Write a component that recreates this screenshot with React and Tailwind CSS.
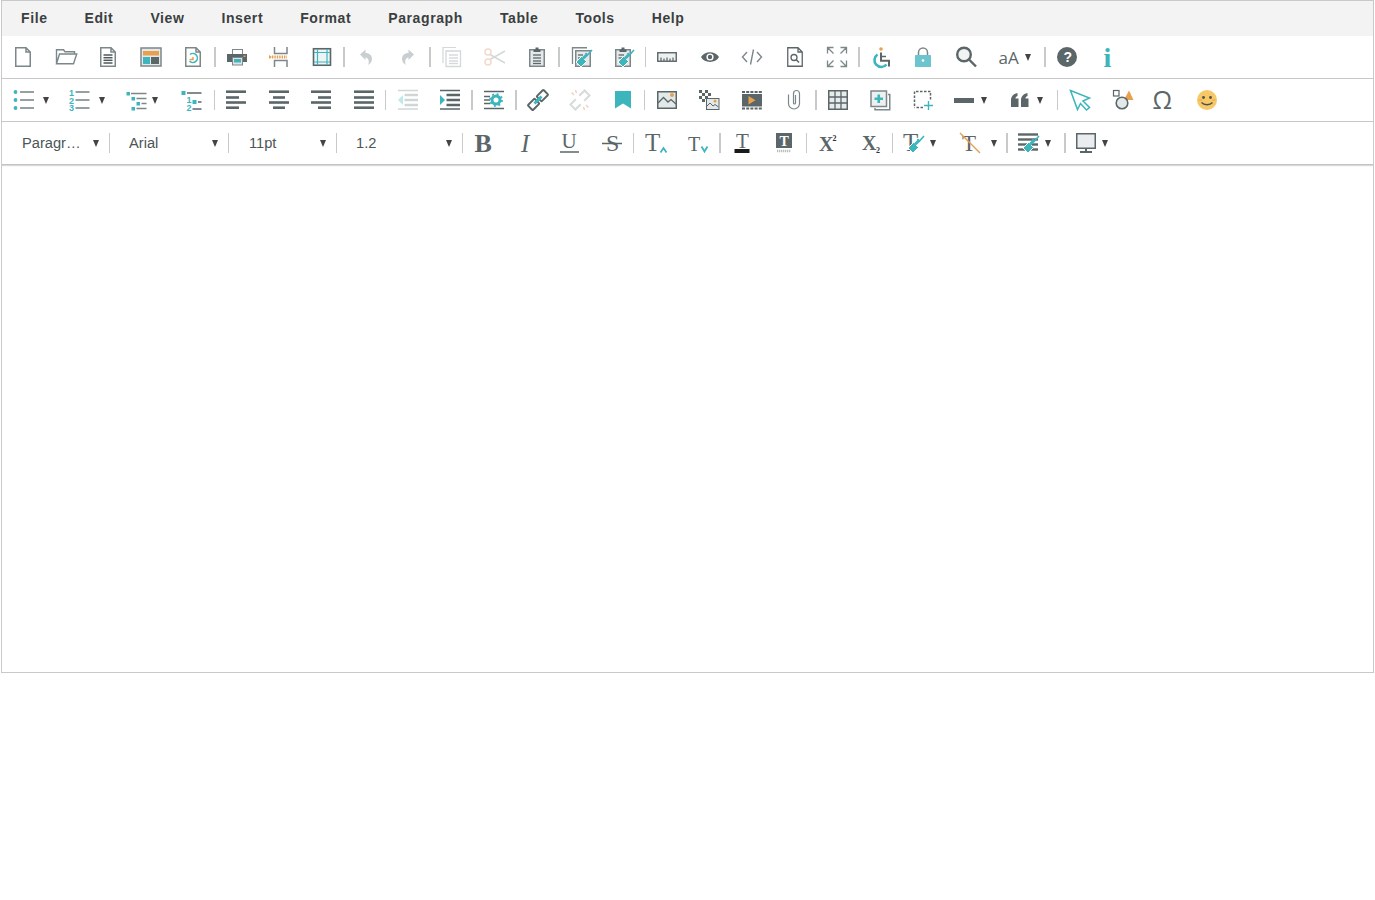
const DK = '#5b6669';
const MD = '#7c878a';
const LT = '#d3d8d9';
const TL = '#3db5bd';
const OR = '#e6a04e';
const SERIF = '"Liberation Serif", serif';

function Ic({ children }) {
  return (
    <svg width="24" height="24" viewBox="0 0 24 24" fill="none" className="block shrink-0 overflow-visible">
      {children}
    </svg>
  );
}

function Brush({ dx = 0, dy = 0 }) {
  return (
    <g transform={`translate(${dx} ${dy})`}>
      <path d="M7 17L12.5 11.5L17.5 16.5L12 22Z" fill={TL} stroke="#fff" strokeWidth="1" />
      <path d="M14 13.5L18 9.5" stroke={TL} strokeWidth="3" />
      <path d="M16.5 8L18.5 10L23 5" stroke={TL} strokeWidth="1.6" />
    </g>
  );
}

function Doc({ c = MD, w = 1.5 }) {
  return <path d="M4.75 2.75H15L19.25 7V21.25H4.75ZM15 2.75V7H19.25" stroke={c} strokeWidth={w} fill="#fff" />;
}

function Lines({ ys, x1 = 2, x2 = 22, c = DK, w = 2.2 }) {
  return ys.map((y, i) => <path key={i} d={`M${x1} ${y}H${x2}`} stroke={c} strokeWidth={w} />);
}

function Txt({ x, y, s, c = DK, b, i, f = SERIF, children }) {
  return (
    <text x={x} y={y} fontSize={s} fill={c} fontFamily={f} fontWeight={b ? 700 : 400} fontStyle={i ? 'italic' : 'normal'}>
      {children}
    </text>
  );
}

const alignL = [[2, 22], [2, 15], [2, 22], [2, 15]];
const alignC = [[2, 22], [6, 18], [2, 22], [6, 18]];
const alignR = [[2, 22], [9, 22], [2, 22], [9, 22]];
const alignJ = [[2, 22], [2, 22], [2, 22], [2, 22]];
const alignY = [3.7, 9.5, 14.5, 19.7];

function Align({ rows }) {
  return <Ic>{rows.map((r, i) => <path key={i} d={`M${r[0]} ${alignY[i]}H${r[1]}`} stroke={DK} strokeWidth="2.6" />)}</Ic>;
}

function Indent({ light }) {
  const c = light ? '#d0d6d6' : DK;
  const t = light ? '#bfe8ea' : TL;
  return (
    <Ic>
      <path d="M2 2.5H22M2 21H22" stroke={c} strokeWidth="1.4" />
      <Lines ys={[7, 12, 17]} x1={8.5} c={c} w={2.5} />
      <path d={light ? 'M2 12L7 7V17Z' : 'M7 12L2 7V17Z'} fill={t} />
    </Ic>
  );
}

function Chain({ light }) {
  const c = light ? '#d6dadb' : DK;
  return (
    <Ic>
      <g transform="rotate(-45 12 12)" stroke={c} strokeWidth="2">
        {light ? (
          <>
            <path d="M9.5 8.5H2V15.5H9.5" />
            <path d="M14.5 8.5H22V15.5H14.5" />
          </>
        ) : (
          <>
            <rect x="1" y="8.5" width="9.5" height="7" rx="0.8" />
            <rect x="13.5" y="8.5" width="9.5" height="7" rx="0.8" />
            <path d="M7 12H17" stroke={TL} strokeWidth="2.8" />
          </>
        )}
      </g>
      {light && <path d="M6 7L3.5 4.5M8.5 5L7.5 2M18 17L20.5 19.5M15.5 19L16.5 22" stroke="#f2cdbd" strokeWidth="1.3" />}
    </Ic>
  );
}

const icons1 = {
  file: <Ic><Doc /></Ic>,
  open: <Ic><path d="M2.5 18.75V4.75H9.5L11 6.75H20.5V9M2.5 18.75L5.5 9H22.75L19.5 18.75Z" stroke={MD} strokeWidth="1.4" /></Ic>,
  doc: <Ic><Doc /><Lines ys={[10, 12.7, 15.3, 18]} x1={7.5} x2={16.5} w={1.5} c="#4d5759" /></Ic>,
  tpl: (
    <Ic>
      <rect x="2" y="3" width="20" height="18" fill="#e4e8e8" stroke={MD} strokeWidth="1.5" />
      <rect x="4" y="6" width="16" height="4.5" fill={OR} />
      <rect x="4" y="12" width="7" height="7" fill={TL} />
      <rect x="12" y="12" width="8" height="7" fill={DK} />
    </Ic>
  ),
  restore: (
    <Ic>
      <Doc />
      <path d="M9 9.5A4.5 4.5 0 1 1 8.5 16" stroke={TL} strokeWidth="1.5" />
      <path d="M12 12V14.5H8.5" stroke={OR} strokeWidth="1.5" />
    </Ic>
  ),
  print: (
    <Ic>
      <rect x="7.5" y="4.5" width="10" height="5" fill="#fff" stroke={MD} />
      <path d="M2 9H22V17H18V13H7V17H2Z" fill={DK} />
      <rect x="7.5" y="12.5" width="10" height="7.5" fill="#dfe3e3" stroke={MD} />
      <rect x="9" y="14" width="7" height="3.5" fill={TL} />
      <rect x="18.5" y="10.5" width="2" height="1.5" fill={OR} />
    </Ic>
  ),
  pbreak: (
    <Ic>
      <path d="M7.5 2V8.5H20V2M7.5 22V15.5H20V22" stroke={MD} strokeWidth="1.5" />
      <path d="M5 12H20" stroke={OR} strokeWidth="3" strokeDasharray="1.4 1" />
      <path d="M2 10V14L5 12Z" fill={OR} />
    </Ic>
  ),
  tblb: (
    <Ic>
      <rect x="3.5" y="3.75" width="17" height="16.5" fill="#eef4f4" stroke={DK} strokeWidth="1.6" />
      <path d="M7.5 4V20M17 4V20M4 7.5H20M4 17H20" stroke={TL} strokeWidth="1.2" />
    </Ic>
  ),
  undo: <Ic><path d="M6 9.5L11.5 4.5V8C15.5 8 18 10.5 18 14C18 16.5 16.5 18.5 14 20C15.5 17.5 15 13 11.5 12.5V15Z" fill="#c9cfd0" /></Ic>,
  redo: <Ic><g transform="matrix(-1 0 0 1 24 0)"><path d="M6 9.5L11.5 4.5V8C15.5 8 18 10.5 18 14C18 16.5 16.5 18.5 14 20C15.5 17.5 15 13 11.5 12.5V15Z" fill="#c9cfd0" /></g></Ic>,
  copy: (
    <Ic>
      <path d="M3 18V2.5H16" stroke={LT} strokeWidth="1.2" />
      <path d="M6 6H20.5V21.5H6Z" fill="#fff" stroke={LT} strokeWidth="1.3" />
      <Lines ys={[10, 13, 16, 18.5]} x1={9} x2={18} c={LT} w={1.4} />
    </Ic>
  ),
  cut: (
    <Ic>
      <path d="M7 9.5L22 18M7 14.5L22 6" stroke={LT} strokeWidth="1.5" />
      <circle cx="5" cy="7" r="3" stroke="#f4d8ca" strokeWidth="1.5" />
      <circle cx="5" cy="17" r="3" stroke="#f4d8ca" strokeWidth="1.5" />
    </Ic>
  ),
  paste: (
    <Ic>
      <rect x="4.75" y="4.75" width="14.5" height="16.5" fill="#e6e9e9" stroke={MD} strokeWidth="1.5" />
      <path d="M8.5 7V4.5H10.5V2.5H13.5V4.5H15.5V7Z" fill={DK} />
      <Lines ys={[10, 13, 16, 18.5]} x1={8} x2={16} c={DK} w={1.3} />
    </Ic>
  ),
  cfmt: (
    <Ic>
      <path d="M3.5 19V2.75H18" stroke={MD} strokeWidth="1.3" />
      <rect x="6.75" y="5.75" width="14.5" height="15.5" fill="#e6e9e9" stroke={MD} strokeWidth="1.5" />
      <Lines ys={[10, 13]} x1={9} x2={14} c={DK} w={1.3} />
      <Brush />
    </Ic>
  ),
  pfmt: (
    <Ic>
      <rect x="4.75" y="4.75" width="14.5" height="16.5" fill="#e6e9e9" stroke={MD} strokeWidth="1.5" />
      <path d="M8.5 7V4.5H10.5V2.5H13.5V4.5H15.5V7Z" fill={DK} />
      <Lines ys={[10, 13]} x1={7.5} x2={13} c={DK} w={1.3} />
      <Brush />
    </Ic>
  ),
  ruler: (
    <Ic>
      <rect x="2.75" y="7.75" width="18.5" height="8.5" fill="#eef0f0" stroke={DK} strokeWidth="1.4" />
      <path d="M6 16V12.5M9 16V13.5M12 16V12.5M15 16V13.5M18 16V12.5" stroke={DK} strokeWidth="1.2" />
    </Ic>
  ),
  eye: (
    <Ic>
      <path d="M3 12C6.5 5.5 17.5 5.5 21 12C17.5 18.5 6.5 18.5 3 12Z" fill={DK} />
      <circle cx="12" cy="12" r="3.6" fill="#fff" />
      <circle cx="12" cy="12" r="2.2" fill={DK} />
    </Ic>
  ),
  code: <Ic><path d="M7 7L2.5 12L7 17M17 7L21.5 12L17 17M13.5 4.5L10.5 19.5" stroke={MD} strokeWidth="1.4" /></Ic>,
  dsearch: (
    <Ic>
      <Doc c={DK} w={1.3} />
      <circle cx="11" cy="12.5" r="3" stroke={DK} strokeWidth="1.3" />
      <path d="M13.3 14.8L16 17.5" stroke={DK} strokeWidth="1.6" />
    </Ic>
  ),
  full: (
    <Ic>
      <path d="M2.5 8.5V2.5H8.5M3 3L8.5 8.5M15.5 2.5H21.5V8.5M21 3L15.5 8.5M2.5 15.5V21.5H8.5M3 21L8.5 15.5M15.5 21.5H21.5V15.5M21 21L15.5 15.5" stroke={MD} strokeWidth="1.3" />
    </Ic>
  ),
  a11y: (
    <Ic>
      <circle cx="12" cy="4" r="1.8" fill={OR} />
      <path d="M12 7.5V15.75H20V21.5" stroke={DK} strokeWidth="2" />
      <path d="M12 11.5H17" stroke={DK} strokeWidth="1.5" />
      <path d="M8.5 9.5A6.8 6.8 0 1 0 17.5 19.5" stroke={TL} strokeWidth="2.6" />
    </Ic>
  ),
  lock: (
    <Ic>
      <path d="M7.5 11V7.5A4.5 4.5 0 0 1 16.5 7.5V11" stroke={MD} strokeWidth="1.5" />
      <rect x="4" y="10" width="16" height="12" rx="0.5" fill="#6cc5ce" />
      <circle cx="12" cy="15.5" r="1.3" fill="#fff" />
    </Ic>
  ),
  search: (
    <Ic>
      <circle cx="10" cy="9.5" r="6.8" fill="#f2f4f4" stroke={DK} strokeWidth="2.4" />
      <path d="M15 14.5L22 21.5" stroke={DK} strokeWidth="2.4" />
    </Ic>
  ),
  help: (
    <Ic>
      <circle cx="12" cy="12" r="10" fill={DK} />
      <Txt x={8.6} y={17} s={14} c="#fff" b f='"Liberation Sans", sans-serif'>?</Txt>
    </Ic>
  ),
  info: <Ic><Txt x={6.5} y={22} s={28} c={TL} b>i</Txt></Ic>,
};

const icons2 = {
  ul: (
    <Ic>
      {[4, 12, 20].map((y) => <circle key={y} cx="5.5" cy={y} r="1.9" fill={TL} />)}
      <Lines ys={[4, 12, 20]} x1={10} x2={24} c={MD} w={1.6} />
    </Ic>
  ),
  ol: (
    <Ic>
      {['1', '2', '3'].map((n, i) => <Txt key={n} x={3} y={8 + i * 7.5} s={9} c={TL} b f='"Liberation Sans", sans-serif'>{n}</Txt>)}
      <Lines ys={[4, 12, 20]} x1={9.5} x2={23.5} c={MD} w={1.6} />
    </Ic>
  ),
  ml: (
    <Ic>
      <path d="M3.5 4H7V7.5H3.5ZM8.5 9H12V12.5H8.5ZM13.5 14H17V17.5H13.5ZM8.5 19H12V22.5H8.5Z" fill={TL} />
      <path d="M8 5.5H23.5M13.5 10.5H23.5M18.5 15.5H23.5M13.5 20.5H23.5" stroke={MD} strokeWidth="1.6" />
    </Ic>
  ),
  il: (
    <Ic>
      <path d="M1.5 3H5.5V7H1.5ZM12.5 12H16.5V16H12.5Z" fill={TL} />
      <path d="M7 5H21.5M18 14H21.5M12.5 21H21.5" stroke={DK} strokeWidth="1.6" />
      <Txt x={6.5} y={15} s={9} c={TL} b f='"Liberation Sans", sans-serif'>1</Txt>
      <Txt x={6.5} y={23} s={9} c={TL} b f='"Liberation Sans", sans-serif'>2</Txt>
    </Ic>
  ),
  pgear: (
    <Ic>
      <path d="M2 3.5H22M2 20.5H22" stroke={DK} strokeWidth="1.6" />
      <Lines ys={[8.5, 12, 15.5]} x2={8} w={1.5} />
      <circle cx="14" cy="12" r="4" stroke={TL} strokeWidth="3" />
      <circle cx="14" cy="12" r="6" stroke={TL} strokeWidth="1.8" strokeDasharray="2 2.7" />
    </Ic>
  ),
  mark: <Ic><path d="M4 3H20V20.5L12 15.5L4 20.5Z" fill={TL} /></Ic>,
  image: (
    <Ic>
      <rect x="2.75" y="3.75" width="18.5" height="16.5" fill="#e3e9e9" stroke={DK} strokeWidth="1.5" />
      <path d="M3 15L8.5 9.5L13 14L16 11.5L21 16" stroke={DK} strokeWidth="1.3" />
      <circle cx="17" cy="7" r="2" fill={OR} />
    </Ic>
  ),
  media: (
    <Ic>
      <path d="M2 2h3v3H2zM8 2h3v3H8zM5 5h3v3H5zM11 5h3v3h-3zM2 8h3v3H2zM8 8h3v3H8zM5 11h3v3H5z" fill={DK} />
      <rect x="9.5" y="10.5" width="12.5" height="11" fill="#e3e9e9" stroke={DK} />
      <path d="M10 18L13 15L16 18L18 16.5L21.5 19" stroke={DK} />
      <circle cx="18" cy="13" r="1.5" fill={OR} />
    </Ic>
  ),
  video: (
    <Ic>
      <rect x="2" y="6" width="20" height="12.5" fill={DK} />
      <path d="M2 4H22M2 20.5H22" stroke={DK} strokeWidth="2" strokeDasharray="3 1.2" />
      <path d="M8.5 8L15.5 12.2L8.5 16.5Z" fill={OR} />
    </Ic>
  ),
  clip: <Ic><path d="M6.5 6.5V15.5A5.5 5.5 0 0 0 17.5 15.5V5.5A3 3 0 0 0 11.5 5.5V15A1 1 0 0 0 13.5 15V7" stroke={MD} strokeWidth="1.2" /></Ic>,
  grid: (
    <Ic>
      <rect x="2.75" y="2.75" width="18.5" height="18.5" fill="#e8ebeb" stroke={DK} strokeWidth="1.5" />
      <path d="M9 3V21M15 3V21M3 9H21M3 15H21" stroke={DK} strokeWidth="1.3" />
    </Ic>
  ),
  add: (
    <Ic>
      <path d="M20 6.5H21.75V21.75H7V20" stroke={MD} strokeWidth="1.5" />
      <rect x="3" y="3" width="15.5" height="15.5" fill="#eef0f0" stroke={MD} strokeWidth="1.5" />
      <path d="M10.75 6.5V15M6.5 10.75H15" stroke={TL} strokeWidth="2.6" />
    </Ic>
  ),
  dash: (
    <Ic>
      <path d="M3.5 18V3.5H19.5V13M12 19.5H3.5" stroke={DK} strokeWidth="1.5" strokeDasharray="2.5 1.5" />
      <path d="M17.5 13V22M13 17.5H22" stroke={TL} strokeWidth="1.4" />
    </Ic>
  ),
  hr: <Ic><rect x="2" y="10" width="20" height="5" fill={DK} /></Ic>,
  quote: (
    <Ic>
      <path d="M3 12.5C3 8.5 5 6 9.5 5V8C8 8.5 7.5 9.5 7.5 10.5H10.5V19H3ZM13 12.5C13 8.5 15 6 19.5 5V8C18 8.5 17.5 9.5 17.5 10.5H20.5V19H13Z" fill={DK} />
    </Ic>
  ),
  cursor: <Ic><path d="M2.5 2.5L21.5 10L15 13L21.5 19.5L18.5 22L12.5 15.5L9.5 21.5Z" stroke={TL} strokeWidth="1.5" /></Ic>,
  shapes: (
    <Ic>
      <rect x="3.5" y="2.5" width="5.5" height="5.5" fill="#fff" stroke={DK} strokeWidth="1.2" />
      <path d="M14 12L19 2.5L23.5 12Z" fill={OR} />
      <circle cx="12" cy="15" r="5.8" fill="#e3e9e9" stroke={DK} strokeWidth="1.6" />
    </Ic>
  ),
  omega: <Ic><Txt x={0.5} y={21} s={25} f='"Open Sans", sans-serif'>Ω</Txt></Ic>,
  smile: (
    <Ic>
      <circle cx="12" cy="12" r="10" fill="#f6c866" />
      <circle cx="8.5" cy="9.5" r="1.4" fill="#50504a" />
      <circle cx="15.5" cy="9.5" r="1.4" fill="#50504a" />
      <path d="M3.5 12H7M17 12H20.5" stroke="#eaa55c" strokeWidth="1" />
      <path d="M6.5 14.5C9 17.5 15 17.5 17.5 14.5" stroke="#50504a" strokeWidth="1.3" />
    </Ic>
  ),
};

const icons3 = {
  b: <Ic><Txt x={2.5} y={20.5} s={26} b>B</Txt></Ic>,
  i: <Ic><Txt x={6} y={20.5} s={25} i>I</Txt></Ic>,
  u: <Ic><Txt x={4.5} y={17} s={21}>U</Txt><path d="M3 21H22" stroke={DK} strokeWidth="1.5" /></Ic>,
  s: <Ic><Txt x={6} y={20} s={24}>S</Txt><path d="M2 12.5H22" stroke={DK} strokeWidth="1.5" /></Ic>,
  up: <Ic><Txt x={2} y={20} s={25}>T</Txt><path d="M17.5 21.5L20.5 17L23.5 21.5" stroke={TL} strokeWidth="1.8" /></Ic>,
  down: <Ic><Txt x={2} y={20} s={20}>T</Txt><path d="M15.5 15.5L18.5 20.5L21.5 15.5" stroke={TL} strokeWidth="1.8" /></Ic>,
  color: <Ic><Txt x={6} y={17} s={21}>T</Txt><rect x="4.5" y="18" width="15" height="4" fill="#1a1a1a" /></Ic>,
  bg: (
    <Ic>
      <rect x="4" y="2" width="16" height="15" fill={DK} />
      <Txt x={7.5} y={15} s={14} c="#fff" b>T</Txt>
      <path d="M5 20H19" stroke="#b9c0c1" strokeWidth="2.4" strokeDasharray="1.3 0.7" />
    </Ic>
  ),
  sup: <Ic><Txt x={3} y={20} s={20} b>X</Txt><Txt x={16.5} y={10} s={8} c="#333" b>2</Txt></Ic>,
  sub: <Ic><Txt x={3} y={19} s={20} b>X</Txt><Txt x={17} y={22} s={8} c="#333" b>2</Txt></Ic>,
  tfmt: <Ic><Txt x={2} y={20} s={25}>T</Txt><Brush /></Ic>,
  tclr: <Ic><Txt x={4} y={20} s={23}>T</Txt><path d="M2 2L22 22" stroke={OR} strokeWidth="1.4" /></Ic>,
  lfmt: (
    <Ic>
      <Lines ys={[3.5, 8.5, 13.5, 18.5]} w={2.4} />
      <Brush />
    </Ic>
  ),
  screen: (
    <Ic>
      <rect x="2.75" y="2.75" width="18.5" height="14.5" fill="#eaecef" stroke={DK} strokeWidth="1.5" />
      <path d="M12 18V20.5" stroke={DK} strokeWidth="2" />
      <path d="M6 21H18" stroke={DK} strokeWidth="2" />
    </Ic>
  ),
};

function Sep() {
  return <div className="w-[1.5px] h-[20px] shrink-0 bg-[#c9c9c9]" />;
}

function Btn({ children }) {
  return <div className="w-[42.45px] shrink-0 flex items-center justify-center">{children}</div>;
}

function Arrow() {
  return (
    <svg width="6" height="7" viewBox="0 0 6 7" className="block shrink-0">
      <path d="M0 0H6L3 7Z" fill="#444" />
    </svg>
  );
}

// icon with a little dropdown arrow, gap is different per button
function Split({ children, gap = 'gap-[6px]' }) {
  return (
    <div className={`w-[56.4px] shrink-0 flex items-center pl-[8px] ${gap}`}>
      {children}
      <Arrow />
    </div>
  );
}

function Select({ label, w, pl }) {
  return (
    <div className={`${w} ${pl} pr-[10px] shrink-0 flex items-center justify-between text-[14.67px] text-[#4c5557]`}>
      <span>{label}</span>
      <Arrow />
    </div>
  );
}

function Row({ children, last }) {
  return (
    <div className={`h-[43px] flex items-center border-b ${last ? 'border-[#c4c4c4] shadow-[0_1px_1px_#d8d8d8]' : 'border-[#c8c8c8]'}`}>
      {children}
    </div>
  );
}

const menus = ['File', 'Edit', 'View', 'Insert', 'Format', 'Paragraph', 'Table', 'Tools', 'Help'];

export default function App() {
  const a = icons1;
  const b = icons2;
  const c = icons3;

  return (
    <div className="min-h-[900px] bg-white font-['Liberation_Sans',sans-serif]">
      <div className="ml-[1px] w-[1373px] h-[673px] border border-[#c9c9c9]">
        <div className="h-[35px] bg-[#f3f3f3] flex items-center pl-[0.5px] text-[14px] font-bold tracking-[0.6px] text-[#3a3f41]">
          {menus.map((m) => (
            <span key={m} className="px-[18.5px]">{m}</span>
          ))}
        </div>

        <Row>
          <Btn>{a.file}</Btn><Btn>{a.open}</Btn><Btn>{a.doc}</Btn><Btn>{a.tpl}</Btn><Btn>{a.restore}</Btn>
          <Sep />
          <Btn>{a.print}</Btn><Btn>{a.pbreak}</Btn><Btn>{a.tblb}</Btn>
          <Sep />
          <Btn>{a.undo}</Btn><Btn>{a.redo}</Btn>
          <Sep />
          <Btn>{a.copy}</Btn><Btn>{a.cut}</Btn><Btn>{a.paste}</Btn>
          <Sep />
          <Btn>{a.cfmt}</Btn><Btn>{a.pfmt}</Btn>
          <Sep />
          <Btn>{a.ruler}</Btn><Btn>{a.eye}</Btn><Btn>{a.code}</Btn><Btn>{a.dsearch}</Btn><Btn>{a.full}</Btn>
          <Sep />
          <Btn>{a.a11y}</Btn><Btn>{a.lock}</Btn><Btn>{a.search}</Btn>
          <div className="w-[57px] shrink-0 flex items-center pl-[11.5px] gap-[6px]">
            <span className="text-[17px] font-['Open_Sans',sans-serif] text-[#5b6669] leading-none">aA</span>
            <Arrow />
          </div>
          <Sep />
          <Btn>{a.help}</Btn><Btn>{a.info}</Btn>
        </Row>

        <Row>
          <Split gap="gap-[9px]">{b.ul}</Split>
          <Split gap="gap-[9px]">{b.ol}</Split>
          <Split gap="gap-[5px]">{b.ml}</Split>
          <Btn>{b.il}</Btn>
          <Sep />
          <Btn><Align rows={alignL} /></Btn><Btn><Align rows={alignC} /></Btn><Btn><Align rows={alignR} /></Btn><Btn><Align rows={alignJ} /></Btn>
          <Sep />
          <Btn><Indent light /></Btn><Btn><Indent /></Btn>
          <Sep />
          <Btn>{b.pgear}</Btn>
          <Sep />
          <Btn><Chain /></Btn><Btn><Chain light /></Btn><Btn>{b.mark}</Btn>
          <Sep />
          <Btn>{b.image}</Btn><Btn>{b.media}</Btn><Btn>{b.video}</Btn><Btn>{b.clip}</Btn>
          <Sep />
          <Btn>{b.grid}</Btn><Btn>{b.add}</Btn><Btn>{b.dash}</Btn>
          <Split gap="gap-[5px]">{b.hr}</Split>
          <Split gap="gap-[5px]">{b.quote}</Split>
          <Sep />
          <Btn>{b.cursor}</Btn><Btn>{b.shapes}</Btn><Btn>{b.omega}</Btn><Btn>{b.smile}</Btn>
        </Row>

        <Row last>
          <Select label="Paragr…" w="w-[106.5px]" pl="pl-[20px]" />
          <Sep />
          <Select label="Arial" w="w-[117.5px]" pl="pl-[19px]" />
          <Sep />
          <Select label="11pt" w="w-[106.5px]" pl="pl-[20px]" />
          <Sep />
          <Select label="1.2" w="w-[124.5px]" pl="pl-[19px]" />
          <Sep />
          <Btn>{c.b}</Btn><Btn>{c.i}</Btn><Btn>{c.u}</Btn><Btn>{c.s}</Btn>
          <Sep />
          <Btn>{c.up}</Btn><Btn>{c.down}</Btn>
          <Sep />
          <Btn>{c.color}</Btn><Btn>{c.bg}</Btn>
          <Sep />
          <Btn>{c.sup}</Btn><Btn>{c.sub}</Btn>
          <Sep />
          <Split gap="gap-[5px]">{c.tfmt}</Split>
          <Split gap="gap-[9px]">{c.tclr}</Split>
          <Sep />
          <Split gap="gap-[5px]">{c.lfmt}</Split>
          <Sep />
          <Split gap="gap-[4px]">{c.screen}</Split>
        </Row>
      </div>
    </div>
  );
}
